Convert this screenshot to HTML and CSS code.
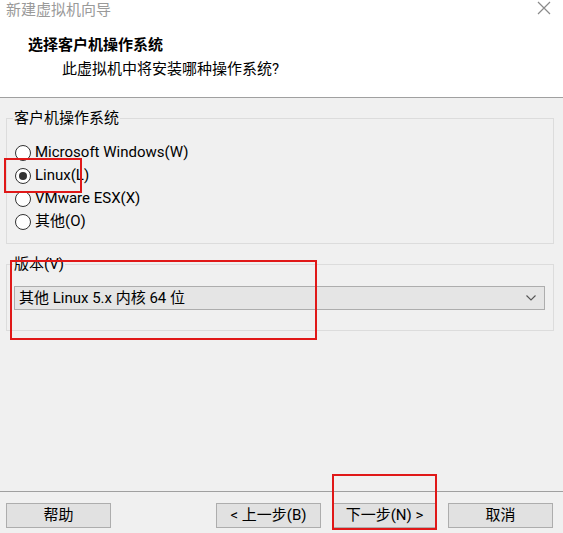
FILE: index.html
```html
<!DOCTYPE html>
<html lang="zh-CN">
<head>
<meta charset="utf-8">
<title>新建虚拟机向导</title>
<link rel="stylesheet" href="styles.css">
</head>
<body>
<div class="dialog">
  <header class="top">
    <div class="titlebar">
      <span class="wintitle">新建虚拟机向导</span>
      <svg class="close" width="14" height="14" viewBox="0 0 14 14"><path d="M1 1 L13 13 M13 1 L1 13" stroke="#8a8a8a" stroke-width="1.2" fill="none"/></svg>
    </div>
    <div class="heading">选择客户机操作系统</div>
    <div class="subheading">此虚拟机中将安装哪种操作系统?</div>
  </header>
  <main class="content">
    <fieldset class="group group-os">
      <legend>客户机操作系统</legend>
      <div class="radios">
        <div class="radio"><span class="dot"></span><span>Microsoft Windows(W)</span></div>
        <div class="radio checked"><span class="dot"></span><span>Linux(L)</span></div>
        <div class="radio"><span class="dot"></span><span>VMware ESX(X)</span></div>
        <div class="radio"><span class="dot"></span><span>其他(O)</span></div>
      </div>
    </fieldset>
    <fieldset class="group group-ver">
      <legend>版本(V)</legend>
      <div class="select">
        <span>其他 Linux 5.x 内核 64 位</span>
        <svg class="chev" width="10" height="6" viewBox="0 0 10 6"><path d="M0.5 0.5 L5 5 L9.5 0.5" stroke="#555" stroke-width="1.1" fill="none"/></svg>
      </div>
    </fieldset>
  </main>
  <footer class="footer">
    <button class="btn">帮助</button>
    <div class="spacer"></div>
    <button class="btn">&lt; 上一步(B)</button>
    <button class="btn">下一步(N) &gt;</button>
    <button class="btn">取消</button>
  </footer>
  <div class="mark mark-linux"></div>
  <div class="mark mark-ver"></div>
  <div class="mark mark-next"></div>
</div>
</body>
</html>
```
FILE: styles.css
```css
html, body {
  margin: 0;
  padding: 0;
  background: #f0f0f0;
}
body {
  font-family: Roboto, "Noto Sans CJK SC", sans-serif;
  font-size: 15px;
  color: #000;
}
.dialog {
  position: relative;
  width: 563px;
  height: 533px;
  display: flex;
  flex-direction: column;
  overflow: hidden;
}
.top {
  background: #fff;
  height: 97px;
  border-bottom: 1px solid #a0a0a0;
  box-sizing: content-box;
}
.titlebar {
  display: flex;
  justify-content: space-between;
  align-items: flex-start;
  height: 20px;
  padding: 0 12px 0 6px;
}
.wintitle {
  color: #9a9a9a;
  line-height: 20px;
}
.close {
  margin-top: 1px;
}
.heading {
  font-weight: bold;
  font-size: 15px;
  line-height: 20px;
  margin: 15px 0 0 28px;
}
.subheading {
  line-height: 20px;
  margin: 4px 0 0 62px;
}
.content {
  flex: 1;
  padding: 0 9px 0 6px;
}
.group {
  margin: 0;
  border: 1px solid #dcdcdc;
  padding: 0 8px 0 6px;
  min-width: 0;
  box-sizing: border-box;
}
.group legend {
  padding: 0 1px;
  margin-left: 0;
  line-height: 16px;
}
.group-os {
  margin-top: 12px;
  height: 134px;
}
.radios {
  padding-top: 15px;
  padding-left: 2px;
}
.radio {
  display: flex;
  align-items: center;
  height: 23px;
  line-height: 23px;
}
.dot {
  width: 16px;
  height: 16px;
  border: 1px solid #333;
  border-radius: 50%;
  background: #fff;
  box-sizing: border-box;
  margin-right: 4px;
  display: flex;
  align-items: center;
  justify-content: center;
  flex: none;
}
.radio.checked .dot::after {
  content: "";
  width: 8px;
  height: 8px;
  border-radius: 50%;
  background: #333;
}
.group-ver {
  margin-top: 12px;
  height: 75px;
}
.select {
  margin-top: 14px;
  margin-left: 1px;
  height: 24px;
  box-sizing: border-box;
  border: 1px solid #adadad;
  background: #e5e5e5;
  display: flex;
  align-items: center;
  justify-content: space-between;
  padding: 0 6px 0 4px;
  line-height: 22px;
}
.chev {
  margin-right: 2px;
}
.footer {
  border-top: 1px solid #a0a0a0;
  height: 42px;
  display: flex;
  align-items: flex-start;
  padding: 11px 10px 0 6px;
  gap: 11px;
  box-sizing: border-box;
}
.spacer {
  flex: 1;
}
.btn {
  width: 105px;
  height: 25px;
  border: 1px solid #adadad;
  background: #e1e1e1;
  font: inherit;
  line-height: 21px;
  padding: 0;
  color: #000;
}
.mark {
  position: absolute;
  border: 2px solid #e01818;
  box-sizing: border-box;
}
.mark-linux {
  left: 4px;
  top: 158px;
  width: 78px;
  height: 35px;
}
.mark-ver {
  left: 10px;
  top: 260px;
  width: 307px;
  height: 80px;
}
.mark-next {
  left: 332px;
  top: 474px;
  width: 105px;
  height: 56px;
}
```
